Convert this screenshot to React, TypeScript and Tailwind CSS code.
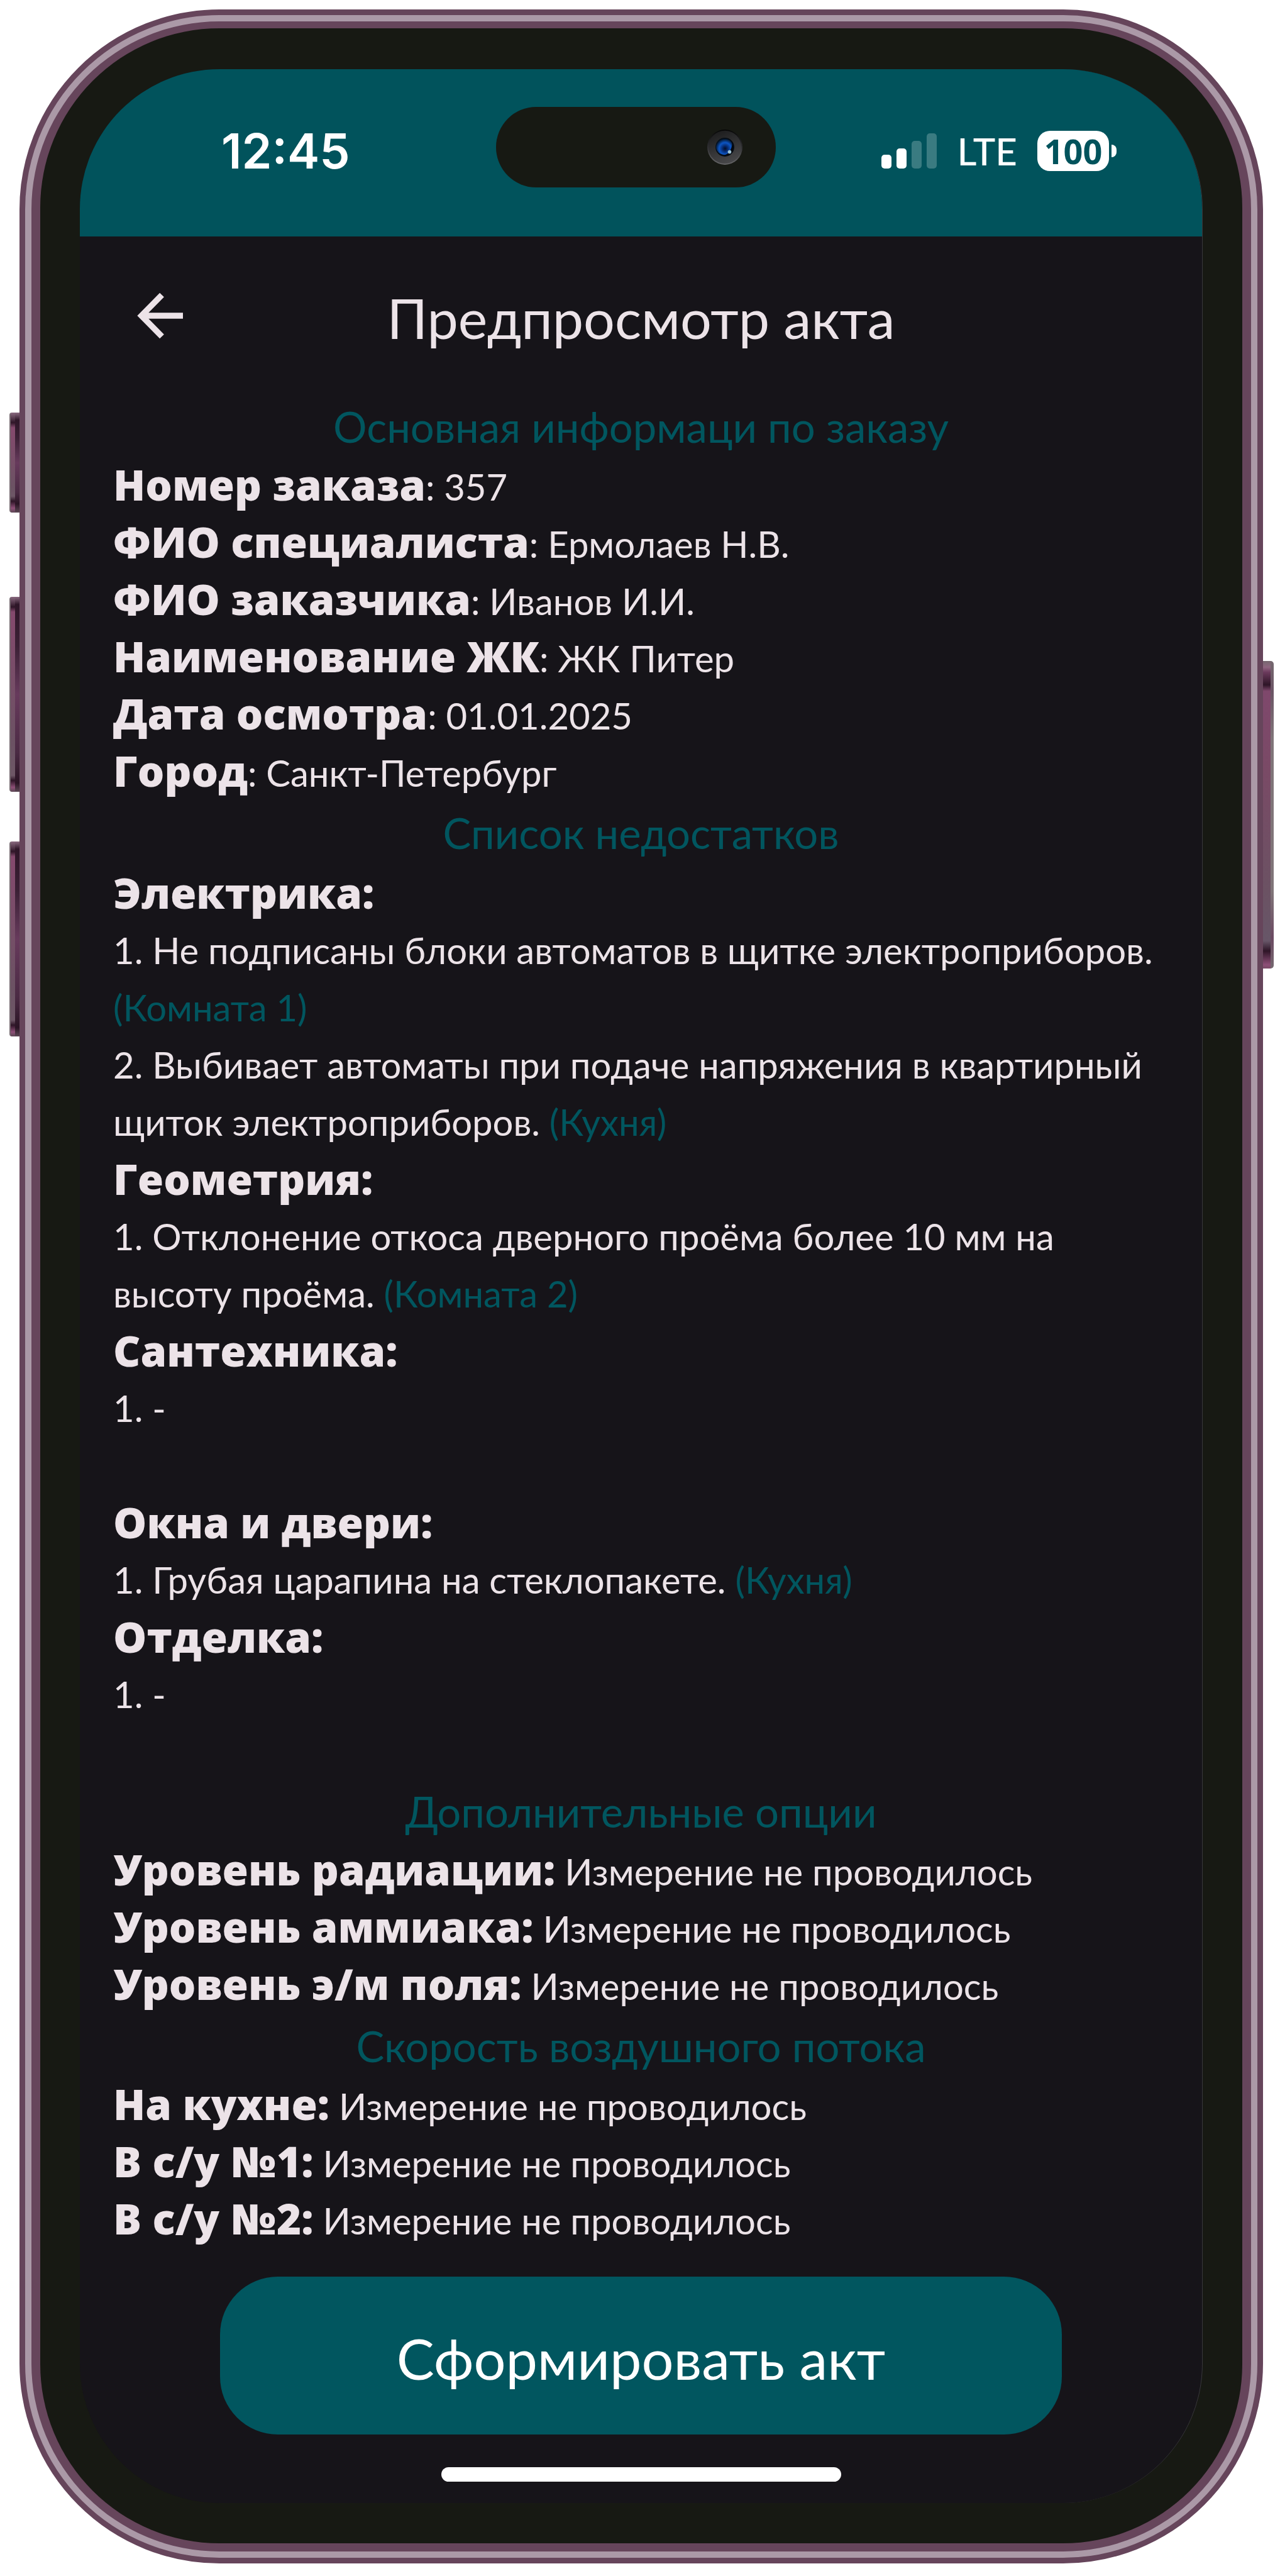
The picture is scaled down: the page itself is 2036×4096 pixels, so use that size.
import React from "react";

type Field = { label: string; value: string };
type Defect = { text: string; room?: string };
type Group = { title: string; items: Defect[] };

const orderInfo: Field[] = [
  { label: "Номер заказа", value: "357" },
  { label: "ФИО специалиста", value: "Ермолаев Н.В." },
  { label: "ФИО заказчика", value: "Иванов И.И." },
  { label: "Наименование ЖК", value: "ЖК Питер" },
  { label: "Дата осмотра", value: "01.01.2025" },
  { label: "Город", value: "Санкт-Петербург" },
];

const defects: Group[] = [
  {
    title: "Электрика:",
    items: [
      { text: "Не подписаны блоки автоматов в щитке электроприборов.", room: "(Комната 1)" },
      { text: "Выбивает автоматы при подаче напряжения в квартирный щиток электроприборов.", room: "(Кухня)" },
    ],
  },
  {
    title: "Геометрия:",
    items: [{ text: "Отклонение откоса дверного проёма более 10 мм на высоту проёма.", room: "(Комната 2)" }],
  },
  { title: "Сантехника:", items: [{ text: "-" }] },
  { title: "Окна и двери:", items: [{ text: "Грубая царапина на стеклопакете.", room: "(Кухня)" }] },
  { title: "Отделка:", items: [{ text: "-" }] },
];

const options: Field[] = [
  { label: "Уровень радиации:", value: "Измерение не проводилось" },
  { label: "Уровень аммиака:", value: "Измерение не проводилось" },
  { label: "Уровень э/м поля:", value: "Измерение не проводилось" },
];

const airflow: Field[] = [
  { label: "На кухне:", value: "Измерение не проводилось" },
  { label: "В с/у №1:", value: "Измерение не проводилось" },
  { label: "В с/у №2:", value: "Измерение не проводилось" },
];

const bold = "font-['Open_Sans',sans-serif] text-[67px] font-extrabold";

function SectionTitle({ children }: { children: React.ReactNode }) {
  return <h2 className="text-center text-[67px] leading-[100px] text-[#01565f]">{children}</h2>;
}

function Row({ label, value, separator = "" }: Field & { separator?: string }) {
  return (
    <p>
      <b className={`${bold} leading-none`}>{label}</b>
      {`${separator} ${value}`}
    </p>
  );
}

function DefectGroup({ title, items }: Group) {
  const empty = items.every((item) => !item.room);
  return (
    <section className={empty ? "pb-[91px]" : ""}>
      <h3 className={`${bold} leading-[91px]`}>{title}</h3>
      <ol>
        {items.map((item, i) => (
          <li key={item.text}>
            {`${i + 1}. ${item.text} `}
            {item.room && <span className="text-[#01565f]">{item.room}</span>}
          </li>
        ))}
      </ol>
    </section>
  );
}

function LeftKey({ className }: { className: string }) {
  return (
    <div className={`absolute left-[-16px] flex w-4 overflow-hidden rounded-l-[4px] ${className}`}>
      <div className="w-[2px] bg-[#75686f]" />
      <div className="w-[7px] bg-[linear-gradient(#8a6a80_0px,#2e1527_16px,#84496d_24px,#6b5263_75%,#6d5766_calc(100%-26px),#2e1527_calc(100%-18px),#8d4f77_calc(100%-7px),#5b4653_100%)]" />
      <div className="w-[7px] bg-[linear-gradient(#8a6a80_0px,#2e1628_12px,#3b2035_25%,#673a5c_50%,#4a2a43_80%,#2a1424_calc(100%-14px),#5b4653_100%)]" />
    </div>
  );
}

function Camera() {
  return (
    <svg className="size-14" viewBox="0 0 60 60" aria-hidden="true">
      <defs>
        <linearGradient id="rim" x1="0" y1="0" x2="0" y2="1">
          <stop offset="0" stopColor="#050505" />
          <stop offset="0.5" stopColor="#303033" />
          <stop offset="1" stopColor="#6a6a6c" />
        </linearGradient>
        <linearGradient id="barrel" x1="0.2" y1="0" x2="0.6" y2="1">
          <stop offset="0" stopColor="#1b1b1c" />
          <stop offset="1" stopColor="#48484a" />
        </linearGradient>
        <radialGradient id="lens" cx="0.55" cy="0.62" r="0.6">
          <stop offset="0" stopColor="#020d28" />
          <stop offset="0.25" stopColor="#06286b" />
          <stop offset="0.6" stopColor="#0c55c4" />
          <stop offset="1" stopColor="#03101f" />
        </radialGradient>
      </defs>
      <circle cx="30" cy="30" r="30" fill="url(#rim)" />
      <circle cx="30" cy="30" r="28" fill="url(#barrel)" />
      <circle cx="30" cy="30" r="16" fill="#050c14" />
      <circle cx="29" cy="29" r="14" fill="url(#lens)" />
      <path d="M43 22a15 15 0 0 1-15 22c8-1 14-10 15-22Z" fill="#04080f" />
      <circle cx="38" cy="38" r="3" fill="#9fc4d6" />
    </svg>
  );
}

function StatusBar() {
  return (
    <div className="flex items-center bg-[#01535c] pt-[60px] pr-[136px] pb-[78px] pl-[225px] text-white">
      <time className="w-[437px] pt-3 font-[Inter,sans-serif] text-[77px] leading-none font-semibold">12:45</time>
      <div className="flex h-32 w-[445px] items-center justify-end rounded-full bg-[#171913] pr-[53px]">
        <Camera />
      </div>
      <div className="ml-auto flex items-center pt-3">
        <div className="flex items-end gap-2">
          <div className="h-[22px] w-4 rounded-[5px] bg-white" />
          <div className="h-8 w-4 rounded-[5px] bg-white" />
          <div className="h-11 w-4 rounded-[5px] bg-[#3a7b81]" />
          <div className="h-14 w-4 rounded-[5px] bg-[#3a7b81]" />
        </div>
        <span className="ml-8 text-[60px] leading-none font-medium">LTE</span>
        <div className="ml-8 flex h-16 w-[114px] items-center justify-center rounded-[20px] bg-white font-['Open_Sans',sans-serif] text-[54px] leading-none font-bold text-[#01535c]">
          100
        </div>
        <div className="ml-1 h-5 w-2 rounded-r-full bg-white" />
      </div>
    </div>
  );
}

export default function App() {
  return (
    <div className="min-h-screen bg-white pt-[15px] pr-[27px] pb-[23px] pl-[31px] font-[Lato,sans-serif]">
      <div className="relative">
        <LeftKey className="top-[641px] h-[159px]" />
        <LeftKey className="top-[934px] h-[310px]" />
        <LeftKey className="top-[1323px] h-[310px]" />
        <div className="absolute top-[1036px] right-[-17px] flex h-[489px] w-[17px] overflow-hidden rounded-r-[5px]">
          <div className="w-3 bg-[linear-gradient(#75686f_0px,#8f6680_10px,#6b3a5c_18px,#2e1527_38px,#7f486c_48px,#7a4a66_35%,#6b5263_75%,#675668_calc(100%-44px),#2e1527_calc(100%-28px),#8d4f77_calc(100%-6px),#7a4a66_100%)]" />
          <div className="w-[5px] bg-[linear-gradient(#75686f,#6b5565_10%,#807579_25%,#807579_75%,#6b4a62_90%,#75686f)]" />
        </div>

        <div className="rounded-[318px] border-[9px] border-[#66455b] bg-[#66455b]">
          <div className="rounded-[309px] border-[10px] border-[#ab99a7] bg-[#ab99a7]">
            <div className="rounded-[299px] border-x-[14px] border-t-[11px] border-b-[13px] border-[#66455b] bg-[#66455b]">
              <div className="rounded-[285px] bg-[#171913] px-[63px] pt-[65px] pb-16">
                <main className="overflow-hidden rounded-[222px] border-r border-[#39383c] bg-[#161419] text-[#ece3e8]">
                  <StatusBar />

                  <header className="relative pt-[76px] pb-[70px]">
                    <h1 className="text-center text-[88px] leading-[106px]">Предпросмотр акта</h1>
                    <button type="button" aria-label="Назад" className="absolute inset-y-0 left-[91px] flex items-center">
                      <svg className="h-[74px] w-[73px]" viewBox="0 0 73 74" fill="none" stroke="currentColor" strokeWidth="9.5">
                        <path d="M73 37H8M39.500 4L7 37l32.500 33" />
                      </svg>
                    </button>
                  </header>

                  <div className="px-[53px] text-[58px] leading-[91px]">
                    <SectionTitle>Основная информаци по заказу</SectionTitle>
                    {orderInfo.map((field) => (
                      <Row key={field.label} {...field} separator=":" />
                    ))}
                    <SectionTitle>Список недостатков</SectionTitle>
                    {defects.map((group) => (
                      <DefectGroup key={group.title} {...group} />
                    ))}
                    <SectionTitle>Дополнительные опции</SectionTitle>
                    {options.map((field) => (
                      <Row key={field.label} {...field} />
                    ))}
                    <SectionTitle>Скорость воздушного потока</SectionTitle>
                    {airflow.map((field) => (
                      <Row key={field.label} {...field} />
                    ))}
                  </div>

                  <div className="px-[223px] pt-11">
                    <button
                      type="button"
                      className="w-full rounded-[92px] bg-[#01565f] pt-[74px] pb-[67px] text-[90px] leading-[110px] text-white"
                    >
                      Сформировать акт
                    </button>
                  </div>
                  <div className="mx-auto mt-[52px] mb-[34px] h-[23px] w-[636px] rounded-full bg-white" />
                </main>
              </div>
            </div>
          </div>
        </div>
      </div>
    </div>
  );
}
